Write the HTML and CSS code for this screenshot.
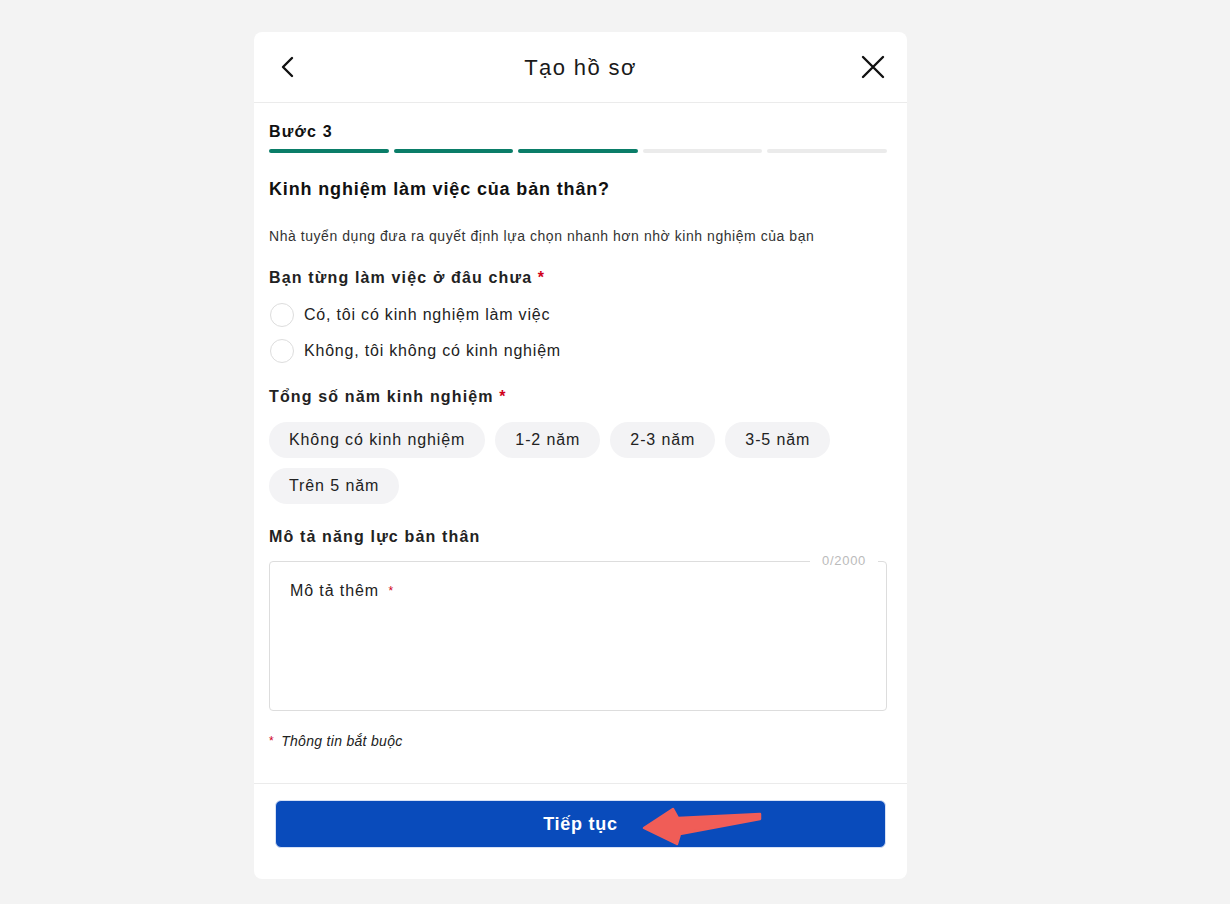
FILE: index.html
```html
<!DOCTYPE html>
<html lang="vi">
<head>
  <meta charset="UTF-8" />
  <title>Tạo hồ sơ</title>
  <link rel="stylesheet" href="styles.css">
</head>
<body>

  <div class="card">
    <div class="card-header">
      <button class="icon-btn" aria-label="Quay lại">
        <svg width="24" height="24" viewBox="0 0 24 24"><path d="M16 3 L7 12 L16 21" fill="none" stroke="#111" stroke-width="2.4" stroke-linecap="round" stroke-linejoin="round"/></svg>
      </button>
      <h1 class="card-title">Tạo hồ sơ</h1>
      <button class="icon-btn" aria-label="Đóng">
        <svg width="24" height="24" viewBox="0 0 24 24"><path d="M2 2 L22 22 M22 2 L2 22" fill="none" stroke="#111" stroke-width="2.4" stroke-linecap="round"/></svg>
      </button>
    </div>

    <div class="card-body">
      <div class="step">Bước 3</div>
      <div class="progress">
        <span class="seg done"></span>
        <span class="seg done"></span>
        <span class="seg done"></span>
        <span class="seg"></span>
        <span class="seg"></span>
      </div>

      <h2 class="question">Kinh nghiệm làm việc của bản thân?</h2>
      <p class="desc">Nhà tuyển dụng đưa ra quyết định lựa chọn nhanh hơn nhờ kinh nghiệm của bạn</p>

      <div class="label label-first">Bạn từng làm việc ở đâu chưa <span class="req">*</span></div>
      <div class="radios">
        <label class="radio"><span class="circle"></span>Có, tôi có kinh nghiệm làm việc</label>
        <label class="radio"><span class="circle"></span>Không, tôi không có kinh nghiệm</label>
      </div>

      <div class="label label-years">Tổng số năm kinh nghiệm <span class="req">*</span></div>
      <div class="chips">
        <span class="chip">Không có kinh nghiệm</span>
        <span class="chip">1-2 năm</span>
        <span class="chip">2-3 năm</span>
        <span class="chip">3-5 năm</span>
        <span class="chip">Trên 5 năm</span>
      </div>

      <div class="label label-desc">Mô tả năng lực bản thân</div>
      <div class="textbox">
        <span class="counter">0/2000</span>
        <div class="placeholder">Mô tả thêm <span class="req-small">*</span></div>
      </div>

      <p class="note"><span class="req-small">*</span> Thông tin bắt buộc</p>
    </div>

    <div class="card-footer">
      <button class="primary">Tiếp tục</button>
    </div>

    <svg class="arrow" width="124" height="42" viewBox="0 0 124 42">
      <polygon points="3,22 32,3 37,12 119,8 119,13 39,28 36,38" fill="#f05d57" stroke="#f05d57" stroke-width="2.5" stroke-linejoin="round"/>
    </svg>
  </div>

</body>
</html>
```

FILE: styles.css
```css
* { box-sizing: border-box; margin: 0; padding: 0; }
body {
  font-family: "Liberation Sans", Arial, sans-serif;
  background: #f3f3f3;
  color: #111;
  padding-top: 32px;
}
.card {
  position: relative;
  width: 653px;
  margin-left: 254px;
  background: #fff;
  border-radius: 8px;
}
.card-header {
  height: 71px;
  display: flex;
  align-items: center;
  justify-content: space-between;
  padding: 0 22px 0 22px;
  border-bottom: 1px solid #ebebeb;
}
.icon-btn {
  background: none;
  border: none;
  width: 24px;
  height: 24px;
  display: flex;
}
.card-title {
  font-size: 22px;
  font-weight: normal;
  letter-spacing: 1.4px;
  color: #1a1a1a;
  margin-top: 1px;
}
.card-body {
  padding: 18px 20px 32px 15px;
}
.step {
  font-size: 16px;
  font-weight: bold;
  letter-spacing: 1.2px;
  line-height: 20px;
  margin-top: 1px;
}
.progress {
  display: flex;
  gap: 5px;
  margin-top: 7px;
}
.seg {
  flex: 1;
  height: 4px;
  border-radius: 2px;
  background: #ebebeb;
}
.seg.done { background: #0a7d68; }
.question {
  font-size: 18px;
  letter-spacing: 0.85px;
  line-height: 24px;
  margin-top: 24px;
}
.desc {
  font-size: 14px;
  letter-spacing: 0.55px;
  line-height: 20px;
  color: #333;
  margin-top: 25px;
}
.label {
  font-size: 16px;
  font-weight: bold;
  letter-spacing: 1.15px;
  line-height: 22px;
  color: #222;
}
.label-first { margin-top: 21px; }
.label-years { margin-top: 23px; }
.label-desc { margin-top: 22px; }
.req { color: #d0021b; }
.radios {
  display: flex;
  flex-direction: column;
  gap: 12px;
  margin-top: 14px;
}
.radio {
  display: flex;
  align-items: center;
  gap: 10px;
  height: 24px;
  font-size: 16px;
  letter-spacing: 0.8px;
  color: #222;
  padding-left: 1px;
}
.circle {
  width: 24px;
  height: 24px;
  border: 1px solid #ddd;
  border-radius: 50%;
}
.chips {
  display: flex;
  flex-wrap: wrap;
  gap: 10px;
  margin-top: 14px;
}
.chip {
  height: 36px;
  line-height: 36px;
  padding: 0 20px;
  border-radius: 18px;
  background: #f3f3f5;
  font-size: 16px;
  letter-spacing: 0.9px;
  color: #222;
}
.textbox {
  position: relative;
  height: 150px;
  margin-top: 13px;
  border: 1px solid #ddd;
  border-radius: 4px;
  padding: 19px 20px;
}
.counter {
  position: absolute;
  top: -9px;
  right: 8px;
  background: #fff;
  padding: 0 12px;
  font-size: 13px;
  letter-spacing: 0.7px;
  line-height: 16px;
  color: #bbb;
}
.placeholder {
  font-size: 16px;
  letter-spacing: 0.9px;
  line-height: 20px;
  color: #222;
}
.req-small {
  color: #d0021b;
  font-size: 12px;
  vertical-align: top;
  margin-left: 4px;
}
.note {
  margin-top: 20px;
  font-size: 14px;
  letter-spacing: 0.3px;
  line-height: 20px;
  font-style: italic;
  color: #222;
}
.note .req-small {
  margin-left: 0;
  margin-right: 3px;
  font-style: normal;
}
.card-footer {
  border-top: 1px solid #ebebeb;
  padding: 16px 21px 31px;
}
.primary {
  width: 100%;
  height: 48px;
  border: 1px solid #d6e0f5;
  border-radius: 6px;
  background: #094bbb;
  color: #fff;
  font-family: "Liberation Sans", Arial, sans-serif;
  font-size: 18px;
  font-weight: bold;
  letter-spacing: 0.75px;
}
.arrow {
  position: absolute;
  left: 387px;
  top: 774px;
}
```
